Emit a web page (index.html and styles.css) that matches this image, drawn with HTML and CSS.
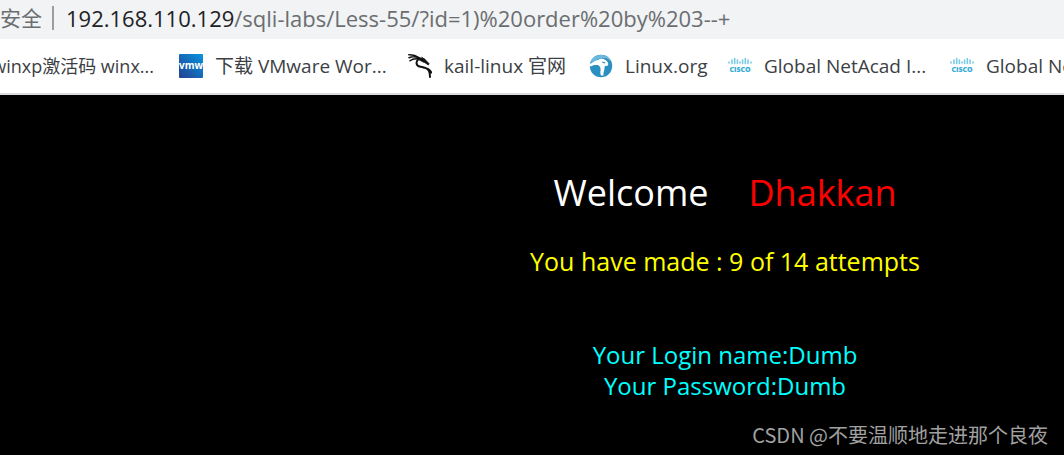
FILE: index.html
```html
<!DOCTYPE html>
<html lang="zh-CN">
<head>
<meta charset="utf-8">
<title>Less-55</title>
<link rel="stylesheet" href="styles.css">
</head>
<body>
<header class="browser">
  <div class="address">
    <span class="security">安全</span>
    <span class="url"><span class="host">192.168.110.129</span>/sqli-labs/Less-55/?id=1)%20order%20by%203--+</span>
  </div>
  <nav class="bookmarks">
    <a class="bookmark first" href="#"><span>winxp激活码 winx...</span></a>
    <a class="bookmark" href="#">
      <svg class="icon" viewBox="0 0 24 24"><defs><linearGradient id="vm" x1="0" y1="1" x2="1" y2="0"><stop offset="0" stop-color="#233f91"/><stop offset="1" stop-color="#0795df"/></linearGradient></defs><rect width="24" height="24" rx="1" fill="url(#vm)"/><text class="vm-word" x="12" y="15" text-anchor="middle">vmw</text></svg>
      <span class="label-vmware">下载 VMware Wor...</span></a>
    <a class="bookmark" href="#">
      <svg class="icon" viewBox="0 0 24 24" fill="none" stroke="#111" stroke-linecap="round" stroke-linejoin="round"><path stroke-width="1.500" d="M.8.8C5 .5 8 1.500 11 3.500M1 3.800C4 2.500 8 2.800 11 4M2 6.800C4 5 7 4.500 10 4.800"/><path stroke-width="2" d="M10.500 5C7.500 7.500 8 11.500 11.500 12.500C15 13.500 19 13 21 17C22 19 22 21 22 23M15 13.500C19 14 22 15.500 23.300 18.500"/><path fill="#111" stroke-width=".8" d="M10 3.800C14 3.500 17 4.500 18 6.500L21 9.500L20.500 11L16.500 8.500C14.500 8 13 6.500 10 5.500ZM14 3.200l3 2.500"/></svg>
      <span class="label-kali">kail-linux 官网</span></a>
    <a class="bookmark" href="#">
      <svg class="icon" viewBox="0 0 24 24"><circle cx="12" cy="12" r="11.200" fill="#2c8fc2"/><path fill="#6bb9dc" d="M2 7C6-1 18-1 22 7L17 4L9 5L3 10Z"/><path fill="#fff" d="M0 9.500C4 10 5 6.500 9 6C12 3.500 17 5 18.500 8C20 10 19 12 17.500 12C16.500 11.500 15.500 12 15.500 14C15.500 17 14 18.500 14.500 21.500L12 21.500C10.500 18 12.500 15.500 11 13C9.500 10.500 8 11 5.500 11C3.500 11.500 2 13 0 12Z"/><path fill="#2c8fc2" d="M13.500 7.500l3 1-1 1-2.500-1z"/></svg>
      <span class="label-linux">Linux.org</span></a>
    <a class="bookmark" href="#">
      <svg class="icon" viewBox="0 0 24 24"><path class="cisco-bars" d="M1 8v1M4 6v3.500M6.700 4.500v5M9.400 6v3.500M12 8v1M14.600 6v3.500M17.300 4.500v5M20 6v3.500M23 8v1"/><text class="cisco-word" x="12" y="18" text-anchor="middle">CISCO</text></svg>
      <span class="label-cisco">Global NetAcad I...</span></a>
    <a class="bookmark" href="#">
      <svg class="icon" viewBox="0 0 24 24"><path class="cisco-bars" d="M1 8v1M4 6v3.500M6.700 4.500v5M9.400 6v3.500M12 8v1M14.600 6v3.500M17.300 4.500v5M20 6v3.500M23 8v1"/><text class="cisco-word" x="12" y="18" text-anchor="middle">CISCO</text></svg>
      <span class="label-cisco">Global NetAcad I...</span></a>
  </nav>
</header>
<main class="page">
  <h1 class="welcome"><span>Welcome</span><span class="name">Dhakkan</span></h1>
  <p class="attempts">You have made : 9 of 14 attempts</p>
  <p class="login">Your Login name:Dumb<br>Your Password:Dumb</p>
</main>
<footer class="watermark">CSDN @不要温顺地走进那个良夜</footer>
</body>
</html>
```
FILE: styles.css
```css
* { box-sizing: border-box; }
body {
  margin: 0;
  min-height: 100vh;
  display: flex;
  flex-direction: column;
  background: #000;
  font-family: "Open Sans", "Noto Sans CJK SC", sans-serif;
  overflow-x: hidden;
}
.address {
  display: flex;
  align-items: center;
  height: 39px;
  padding-bottom: 4px;
  background: #f1f3f4;
  color: #6b6e71;
  font-size: 22px;
  line-height: 24px;
  white-space: nowrap;
}
.security {
  padding-right: 10px;
  border-right: 2px solid #9a9da1;
  margin-right: 12px;
  font-size: 21px;
}
.host { color: #202124; }
.bookmarks {
  display: flex;
  align-items: center;
  gap: 25px;
  height: 56px;
  padding-bottom: 1px;
  background: #fff;
  border-bottom: 2px solid #dadce0;
  overflow: hidden;
}
.bookmark {
  display: flex;
  flex: none;
  align-items: center;
  gap: 12px;
  color: #3c4043;
  font-size: 19px;
  line-height: 24px;
  text-decoration: none;
  white-space: nowrap;
}
.first { width: 154px; justify-content: flex-end; font-size: 18px; }
.label-vmware { width: 168px; }
.label-kali { width: 120px; }
.label-linux { width: 78px; }
.label-cisco { width: 161px; }
.icon { width: 24px; height: 24px; flex: none; }
.cisco-bars { stroke: #7bcbe5; stroke-width: 1.6; stroke-linecap: round; }
.cisco-word { font: 800 7px "Open Sans", sans-serif; fill: #35acd5; }
.vm-word { font: bold 10px "Open Sans", sans-serif; fill: #fff; }
.page {
  flex: 1;
  padding: 72px 0 0 386px;
  text-align: center;
}
.welcome {
  display: flex;
  justify-content: center;
  gap: 40px;
  margin: 0;
  color: #fff;
  font-size: 36px;
  font-weight: 400;
  line-height: 52px;
}
.name { color: #f00; }
.attempts {
  margin: 27px 0 0;
  color: #ff0;
  font-size: 25px;
  line-height: 31px;
}
.login {
  margin: 62px 0 0;
  color: #0ff;
  font-size: 24px;
  line-height: 31px;
}
.watermark {
  padding: 0 16px 6px;
  color: #a0a0a0;
  font-family: "Noto Sans CJK SC", sans-serif;
  font-size: 20px;
  line-height: 28px;
  text-align: right;
}
```
